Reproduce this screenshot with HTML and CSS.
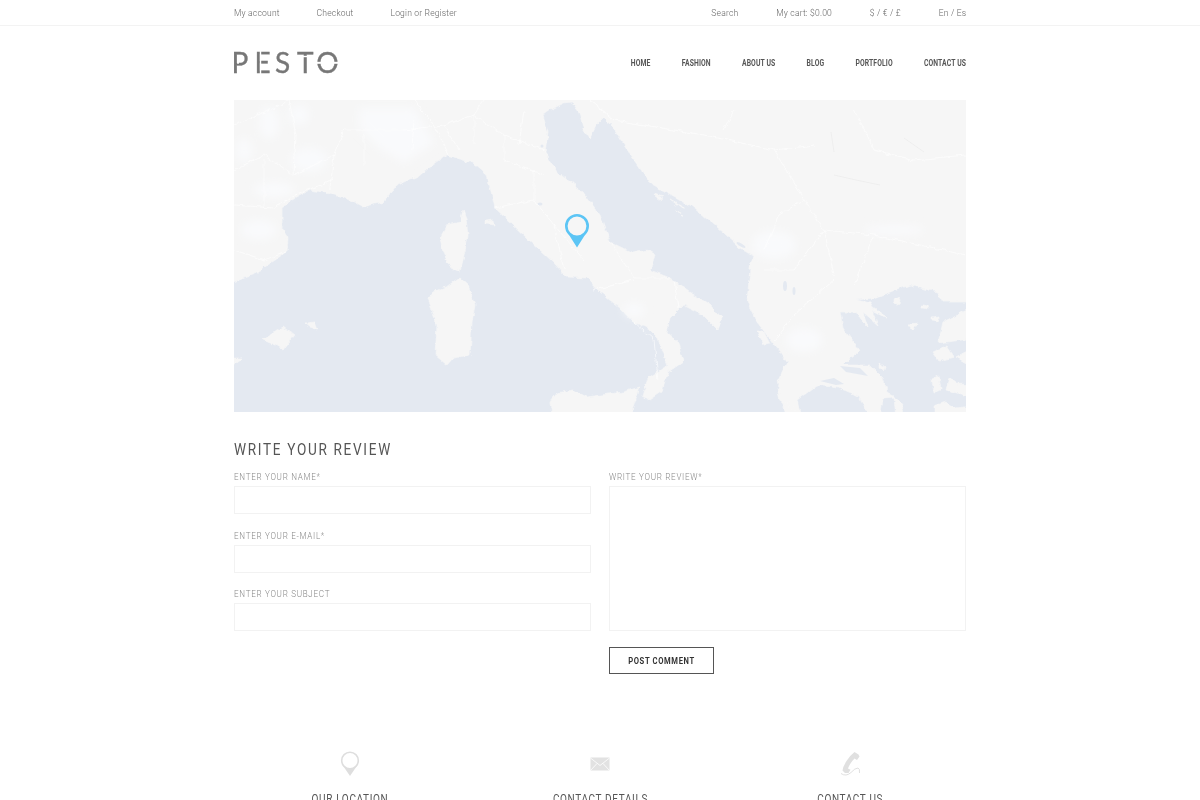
FILE: index.html
```html
<!DOCTYPE html>
<html lang="en">
<head>
<meta charset="utf-8">
<title>Pesto - Contact</title>
<link rel="stylesheet" href="styles.css">
</head>
<body>
<div class="topbar">
  <div class="wrap topbar-in">
    <nav class="top-left">
      <a>My account</a><a>Checkout</a><a>Login or Register</a>
    </nav>
    <nav class="top-right">
      <a>Search</a><a>My cart: $0.00</a><a>$ / € / £</a><a>En / Es</a>
    </nav>
  </div>
</div>
<header class="wrap header">
  <svg class="logo" width="106" height="24" viewBox="0 0 106 24" aria-label="PESTO">
    <text y="22" x="-2.500 20.500 41 63 82.300" class="logo-text">PESTO</text>
    <rect x="3" y="10.500" width="2" height="2.200" fill="#fff"/>
    <rect x="25.800" y="0" width="1.400" height="24" fill="#fff"/>
    <rect x="67" y="4.800" width="14" height="1.400" fill="#fff"/>
    <rect x="83" y="10.800" width="7" height="2" fill="#fff"/>
    <rect x="96" y="10.800" width="8" height="2" fill="#fff"/>
  </svg>
  <nav class="main-nav">
    <a>HOME</a><a>FASHION</a><a>ABOUT US</a><a>BLOG</a><a>PORTFOLIO</a><a>CONTACT US</a>
  </nav>
</header>
<main class="wrap">
  <svg class="map" width="732" height="312" viewBox="0 0 732 312" role="img" aria-label="Map of Italy">
    <defs>
      <filter id="coast" x="-5%" y="-5%" width="110%" height="110%">
        <feTurbulence type="fractalNoise" baseFrequency=".14" numOctaves="3" seed="4"/>
        <feDisplacementMap in="SourceGraphic" scale="5" xChannelSelector="R" yChannelSelector="G"/>
        <feGaussianBlur stdDeviation=".35"/>
      </filter>
      <filter id="soft" x="-20%" y="-20%" width="140%" height="140%">
        <feGaussianBlur stdDeviation="4"/>
      </filter>
      <clipPath id="mapclip"><rect width="732" height="312"/></clipPath>
    </defs>
    <rect width="732" height="312" fill="#e4e9f1"/>
    <g clip-path="url(#mapclip)">
    <g fill="#f6f6f6" stroke="#f6f6f6" stroke-width=".6" stroke-linejoin="round" filter="url(#coast)">
      <path d="M-9-9H741V202H731L709 202 703 192 676 185 656 192 639 198 622 200 636 203 639 208 654 218 649 217 638 211 644 225 636 218 629 212 634 227 626 218 622 212 613 212 606 212 609 228 626 252 616 258 609 265 636 265 649 278 653 292 661 297 649 298 646 321H638L625 296 605 288 583 285 563 300 568 321H556L546 300 543 288 548 272 553 262 543 248 523 222 513 202 516 168 519 155 506 148 489 132 456 105 416 83 399 58 386 38 376 22 369 18 363 24 356 38 349 28 345 12 338 2 330 3 316 10 309 15 314 32 311 52 323 72 349 92 366 115 376 142 399 153 413 150 421 155 416 170 436 178 456 192 476 205 488 218 484 230 469 215 449 205 436 218 433 232 444 242 449 262 434 272 428 292 416 300 408 297 414 278 434 265 424 238 414 228 399 222 386 208 366 192 353 178 333 177 319 162 293 138 279 125 261 108 253 75 239 63 213 55 199 65 186 75 163 85 149 102 129 107 116 100 89 92 76 90 58 100 48 108 48 128 54 137 53 152 19 175-9 185Z"/>
      <path d="M229 110 232 120 234 135 231 152 226 172 216 167 209 152 206 138 213 125 226 122Z"/>
      <path d="M226 178 234 185 241 205 238 222 236 255 219 258 213 265 201 255 203 225 194 198 199 192 216 185Z"/>
      <path d="M29 240 49 227 60 235 49 250 41 245Z"/>
      <path d="M71 223 81 222 84 230 76 227Z"/>
      <path d="M-5 258 8 258-5 268Z"/>
      <path d="M252 121 259 120 260 125 252 124Z"/>
      <path d="M316 302 323 293 339 290 353 297 389 292 406 287 394 321H319Z"/>
      <path d="M741 206 709 222 704 243 729 240 741 236Z"/>
      <path d="M698 252 712 246 720 258 705 262Z"/>
      <path d="M741 247 722 257 741 268Z"/>
      <path d="M698 279 705 276 707 290 700 293Z"/>
      <path d="M715 278 722 284 741 285V298L712 290Z"/>
      <path d="M663 197a3 4 0 1 1-.1 0Z"/>
      <path d="M688 205l6 1 1 3-7-1Z"/>
      <path d="M698 217l8-1-2 5-6-1Z"/>
      <path d="M674 224l10-1-5 8Z"/>
      <path d="M646 263l5 4-1 4-4-4Z"/>
      <path d="M524 232 530 232 536 244 530 245Z"/>
      <path d="M543 280l6-1 2 12-5 2Z"/>
      <path d="M552 302l5-1 4 9-4 1Z"/>
      <path d="M660 295 668 306 672 321H662Z"/>
      <path d="M700 306 712 302 720 308 741 306V321H700Z"/>
      <path d="M418 82 432 88 428 90ZM424 97l6 2-5 1ZM436 100l16 9-4 0ZM441 111l8 4-1 0ZM420 94l10 3-8 0Z"/>
    </g>
    <g fill="#e4e9f1">
      <ellipse cx="507" cy="145" rx="5" ry="1.500" transform="rotate(30 507 145)"/>
      <ellipse cx="551" cy="186" rx="2" ry="5"/>
      <ellipse cx="560" cy="191" rx="1.500" ry="4"/>
      <path d="M606 266l20 2 8 8-22-4Z"/>
      <path d="M586 281l14-3 10 6-8 1Z"/>
      <circle cx="308" cy="46" r="1.500"/>
      <ellipse cx="306" cy="104" rx="2.500" ry="1.500"/>
    </g>
    <g fill="#f9fafc" filter="url(#soft)">
      <path d="M125 8l55 0 20 35-30 20-25-15-20-20Z"/>
      <ellipse cx="75" cy="60" rx="18" ry="12"/>
      <ellipse cx="40" cy="90" rx="20" ry="8"/>
      <ellipse cx="35" cy="23" rx="10" ry="16"/>
      <ellipse cx="65" cy="15" rx="10" ry="10"/>
      <ellipse cx="10" cy="50" rx="8" ry="12"/>
      <ellipse cx="25" cy="130" rx="18" ry="10"/>
      <ellipse cx="540" cy="145" rx="22" ry="14"/>
      <ellipse cx="570" cy="240" rx="18" ry="12"/>
      <ellipse cx="660" cy="130" rx="30" ry="5"/>
      <ellipse cx="400" cy="210" rx="10" ry="7"/>
    </g>
    <g fill="none" stroke="#fff" stroke-width=".7" opacity=".85" filter="url(#coast)">
      <path d="M0 25 40 8 56 0M0 70 30 55 60 75 100 55 110 30M55 0 62 35 60 75M0 105 40 108 60 95 100 80M30 60 30 108M0 150 30 160 53 152M100 55 96 88M130 35 130 65"/>
      <path d="M110 30 170 30 210 25 240 15 270 35 310 50M180 0 200 25 215 55M240 15 250 0M270 35 270 60 310 75M260 108 300 100 320 125 330 170M300 100 300 70M320 125 350 160M180 20 178 50M210 25 225 50M240 15 240 45M290 10 285 45"/>
      <path d="M376 142 400 178 436 178M360 190 400 180M440 180 444 208M400 222 420 240 424 280"/>
      <path d="M356 0 380 20 470 35 540 50 570 100 590 130 640 135 732 155M590 130 560 170 530 170M620 10 640 50 680 60 732 55M540 50 580 45M600 180 560 215 540 240M640 135 620 185M500 10 490 30M570 100 545 115 530 150M590 130 600 175"/>
    </g>
    </g>
    <g fill="none" stroke="#ebebeb" stroke-width=".7">
      <path d="M597 32l3 20M600 75l22 5 24 5M670 38l20 14"/>
    </g>
    <circle cx="343" cy="126" r="10.700" fill="none" stroke="#5cc5f5" stroke-width="2.600"/>
    <path d="M333.500 132.500Q338 136 343 136.500Q348 136 352.500 132.500L343 147.500Z" fill="#5cc5f5"/>
  </svg>

  <section class="review">
    <h2 class="review-title">WRITE YOUR REVIEW</h2>
    <form class="review-form">
      <div class="col-fields">
        <label class="field"><span>ENTER YOUR NAME*</span><input type="text"></label>
        <label class="field"><span>ENTER YOUR E-MAIL*</span><input type="text"></label>
        <label class="field"><span>ENTER YOUR SUBJECT</span><input type="text"></label>
      </div>
      <div class="col-message">
        <label class="field"><span>WRITE YOUR REVIEW*</span><textarea></textarea></label>
        <button type="button" class="post"><span class="post-label">POST COMMENT</span></button>
      </div>
    </form>
  </section>

  <section class="contact">
    <div class="contact-col">
      <svg width="22" height="26" viewBox="0 0 22 26"><circle cx="11" cy="9.500" r="8.300" fill="none" stroke="#dedede" stroke-width="1.600"/><path d="M3.500 14Q7 18 11 18Q15 18 18.500 14L11 25Z" fill="#dedede"/></svg>
      <h3>OUR LOCATION</h3>
    </div>
    <div class="contact-col">
      <svg width="22" height="26" viewBox="0 0 22 26"><rect x="1.500" y="6.500" width="19" height="13" fill="#e2e2e2"/><path d="M1.500 7 11 14.500 20.500 7M1.500 19.500 8 12.500M20.500 19.500 14 12.500" fill="none" stroke="#fff" stroke-width=".8"/></svg>
      <h3>CONTACT DETAILS</h3>
    </div>
    <div class="contact-col">
      <svg width="22" height="26" viewBox="0 0 22 26"><path d="M15.500 1 19.500 3.500 20.500 5.500 18 9 15.500 7.500Q13.500 9.500 11.500 12.500 9.500 15.500 9 17.500L11.500 18.800 9.500 22 6 22 3.500 19.500Q4 15.500 7.500 10 11.500 4 15.500 1Z" fill="#e0e0e0"/><path d="M2 22.500Q7 26 12 21.500 16 17 19 17 21 17.500 20.500 22" fill="none" stroke="#d8d8d8" stroke-width=".8"/></svg>
      <h3>CONTACT US</h3>
    </div>
  </section>
</main>
</body>
</html>
```
FILE: styles.css
```css
* { box-sizing: border-box; }
html, body { margin: 0; padding: 0; background: #fff; overflow: hidden; height: 800px; }
body { font-family: Roboto, "Liberation Sans", sans-serif; color: #777; }
.wrap { width: 732px; margin: 0 auto; }

.topbar { height: 26px; border-bottom: 1px solid #f3f3f3; }
.topbar-in { display: flex; justify-content: space-between; align-items: center; height: 25px; font-weight: 300; font-size: 9.500px; color: #666; letter-spacing: .2px; }
.top-left, .top-right { display: flex; gap: 41px; transform: scaleX(.9); }
.top-left { transform-origin: left center; }
.top-right { gap: 42px; transform-origin: right center; }

.header { height: 74px; display: flex; align-items: center; justify-content: space-between; }
.logo { display: block; will-change: transform; }
.logo-text { font-family: Lato, sans-serif; font-size: 28px; font-weight: 400; fill: #777; stroke: #777; stroke-width: .35px; }
.main-nav { display: flex; gap: 39px; font-weight: 700; font-size: 8.500px; color: #555; letter-spacing: .15px; transform: scaleX(.8); transform-origin: right center; }

.map { display: block; }

.review { margin-top: 30px; }
.review-title { margin: 0; font-weight: 400; font-size: 17px; line-height: 15px; letter-spacing: 2.100px; color: #555; transform: scaleX(.8); transform-origin: left center; }
.review-form { display: grid; grid-template-columns: 357px 357px; gap: 18px; margin-top: 11px; }
.col-fields { display: flex; flex-direction: column; gap: 12.500px; }
.col-message { display: flex; flex-direction: column; gap: 16px; align-items: flex-start; }
.col-message .field { width: 100%; }
.field { display: block; }
.field span { display: block; font-size: 8.500px; font-weight: 300; line-height: 18px; letter-spacing: .75px; color: #888; transform: scaleX(.95); transform-origin: left center; }
.field input, .field textarea { display: block; width: 100%; margin: 0; padding: 0; border: 1px solid #f2f2f2; background: #fff; outline: none; resize: none; border-radius: 0; }
.field input { height: 28px; }
.field textarea { height: 145px; }
.post { width: 105px; height: 27px; padding: 0; background: #fff; border: 1px solid #555; font-family: Roboto, sans-serif; font-weight: 700; font-size: 9.500px; letter-spacing: .8px; color: #333; }
.post-label { display: block; transform: scaleX(.8); }

.contact { display: grid; grid-template-columns: repeat(3, 232px); gap: 18px; margin-top: 77px; }
.contact-col { display: flex; flex-direction: column; align-items: center; }
.contact-col svg { display: block; }
.contact-col h3 { margin: 15px 0 0; font-weight: 400; font-size: 12.500px; line-height: 14px; letter-spacing: .8px; color: #555; transform: scaleX(.8); white-space: nowrap; }
```
